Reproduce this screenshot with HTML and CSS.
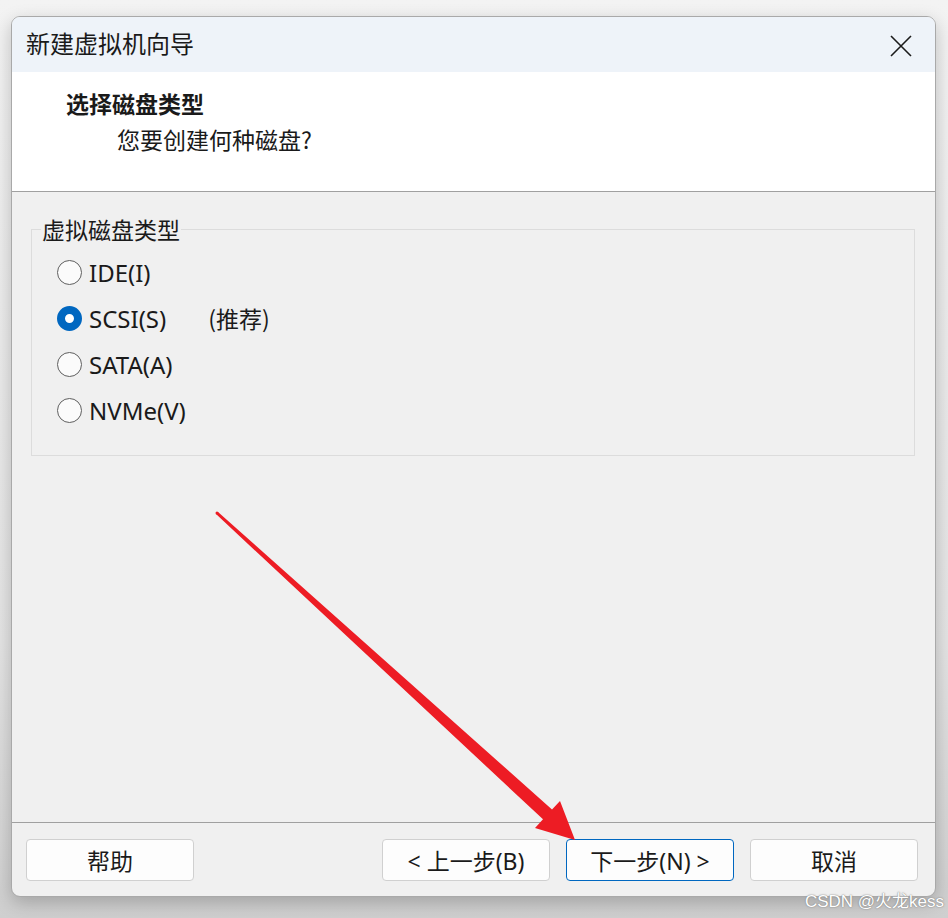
FILE: index.html
```html
<!DOCTYPE html>
<html lang="zh-CN">
<head>
  <meta charset="UTF-8">
  <title>新建虚拟机向导</title>
  <link rel="stylesheet" href="styles.css">
</head>
<body>
  <div class="stage">
    <div class="window">
      <div class="titlebar">
        <span class="title">新建虚拟机向导</span>
        <svg class="close" width="22" height="22" viewBox="0 0 22 22">
          <path d="M1 1 L21 21 M21 1 L1 21" stroke="#1b1b1b" stroke-width="1.6" fill="none"/>
        </svg>
      </div>

      <div class="header">
        <div class="heading">选择磁盘类型</div>
        <div class="subtitle">您要创建何种磁盘?</div>
      </div>

      <div class="content">
        <fieldset class="group">
          <legend>虚拟磁盘类型</legend>
          <label class="option"><span class="radio"></span>IDE(I)</label>
          <label class="option"><span class="radio checked"></span>SCSI(S)<span class="hint">(推荐)</span></label>
          <label class="option"><span class="radio"></span>SATA(A)</label>
          <label class="option"><span class="radio"></span>NVMe(V)</label>
        </fieldset>
      </div>

      <div class="footer">
        <button class="btn">帮助</button>
        <div class="nav">
          <button class="btn">&lt; 上一步(B)</button>
          <button class="btn primary">下一步(N) &gt;</button>
          <button class="btn">取消</button>
        </div>
      </div>
    </div>

    <svg class="arrow" width="948" height="918" viewBox="0 0 948 918">
      <polygon fill="#ed1c24" points="218,511.9 552,809.5 560,801 575,840 535,828 543,819.3 216,514.1"/>
      <circle cx="217" cy="513" r="1.5" fill="#ed1c24"/>
    </svg>

    <div class="watermark">CSDN @火龙kess</div>
  </div>
</body>
</html>
```

FILE: styles.css
```css
body {
  margin: 0;
  background: #ececec;
  font-family: "Noto Sans", "Noto Sans CJK SC", sans-serif;
  color: #1a1a1a;
}
.stage {
  position: relative;
  width: 948px;
  height: 918px;
  padding: 16px 0 0 11px;
  box-sizing: border-box;
  background: linear-gradient(#f3f3f3, #e4e4e4 70%, #cfcfcf);
  overflow: hidden;
}
.window {
  width: 925px;
  height: 881px;
  box-sizing: border-box;
  border: 1px solid #a9a9a9;
  border-radius: 9px;
  overflow: hidden;
  display: flex;
  flex-direction: column;
  background: #f0f0f0;
  box-shadow: 0 6px 18px rgba(0, 0, 0, 0.22);
}
.titlebar {
  height: 55px;
  flex: none;
  background: #eef3f9;
  display: flex;
  align-items: center;
  justify-content: space-between;
  padding: 0 23px 0 14px;
}
.title {
  font-family: "Noto Sans CJK SC", sans-serif;
  font-size: 24px;
  margin-top: -5px;
}
.close {
  margin-top: 2px;
}
.header {
  height: 120px;
  flex: none;
  background: #fff;
  border-bottom: 1px solid #a0a0a0;
  font-family: "Noto Sans CJK SC", sans-serif;
  font-size: 23px;
  line-height: 32px;
  padding-top: 15px;
  box-sizing: border-box;
}
.heading {
  font-weight: bold;
  padding-left: 54px;
}
.subtitle {
  padding-left: 105px;
  margin-top: 4px;
}
.content {
  flex: 1;
  padding: 20px 20px 0 19px;
}
.group {
  margin: 0;
  height: 244px;
  box-sizing: border-box;
  border: 1px solid #dcdcdc;
  padding: 3px 0 0 25px;
}
.group legend {
  font-family: "Noto Sans CJK SC", sans-serif;
  font-size: 23px;
  padding: 0 1px;
  margin-left: -16px;
  color: #1a1a1a;
}
.option {
  display: flex;
  align-items: center;
  height: 46px;
  font-size: 24px;
}
.radio {
  width: 25px;
  height: 25px;
  box-sizing: border-box;
  border: 1.5px solid #5f5f5f;
  border-radius: 50%;
  margin-right: 7px;
  background: #fbfbfb;
}
.radio.checked {
  border: 8px solid #0067c0;
  background: #fff;
}
.hint {
  font-family: "Noto Sans CJK SC", sans-serif;
  font-size: 23px;
  margin-left: 42px;
}
.footer {
  height: 74px;
  flex: none;
  border-top: 1px solid #a0a0a0;
  display: flex;
  justify-content: space-between;
  padding: 16px 17px 0 14px;
  box-sizing: border-box;
}
.nav {
  display: flex;
  gap: 16px;
}
.btn {
  width: 168px;
  height: 42px;
  background: #fdfdfd;
  border: 1px solid #d0d0d0;
  border-radius: 4px;
  font-family: "Noto Sans", "Noto Sans CJK SC", sans-serif;
  font-size: 23px;
  color: #1a1a1a;
  padding: 0;
}
.btn.primary {
  border-color: #0067c0;
}
.arrow {
  position: absolute;
  left: 0;
  top: 0;
  pointer-events: none;
}
.watermark {
  position: absolute;
  right: 4px;
  bottom: 6px;
  font-family: "Liberation Sans", "Noto Sans CJK SC", sans-serif;
  font-size: 17px;
  color: #fff;
  text-shadow: 0 0 1px #777, 0 0 2px #999;
}
```
